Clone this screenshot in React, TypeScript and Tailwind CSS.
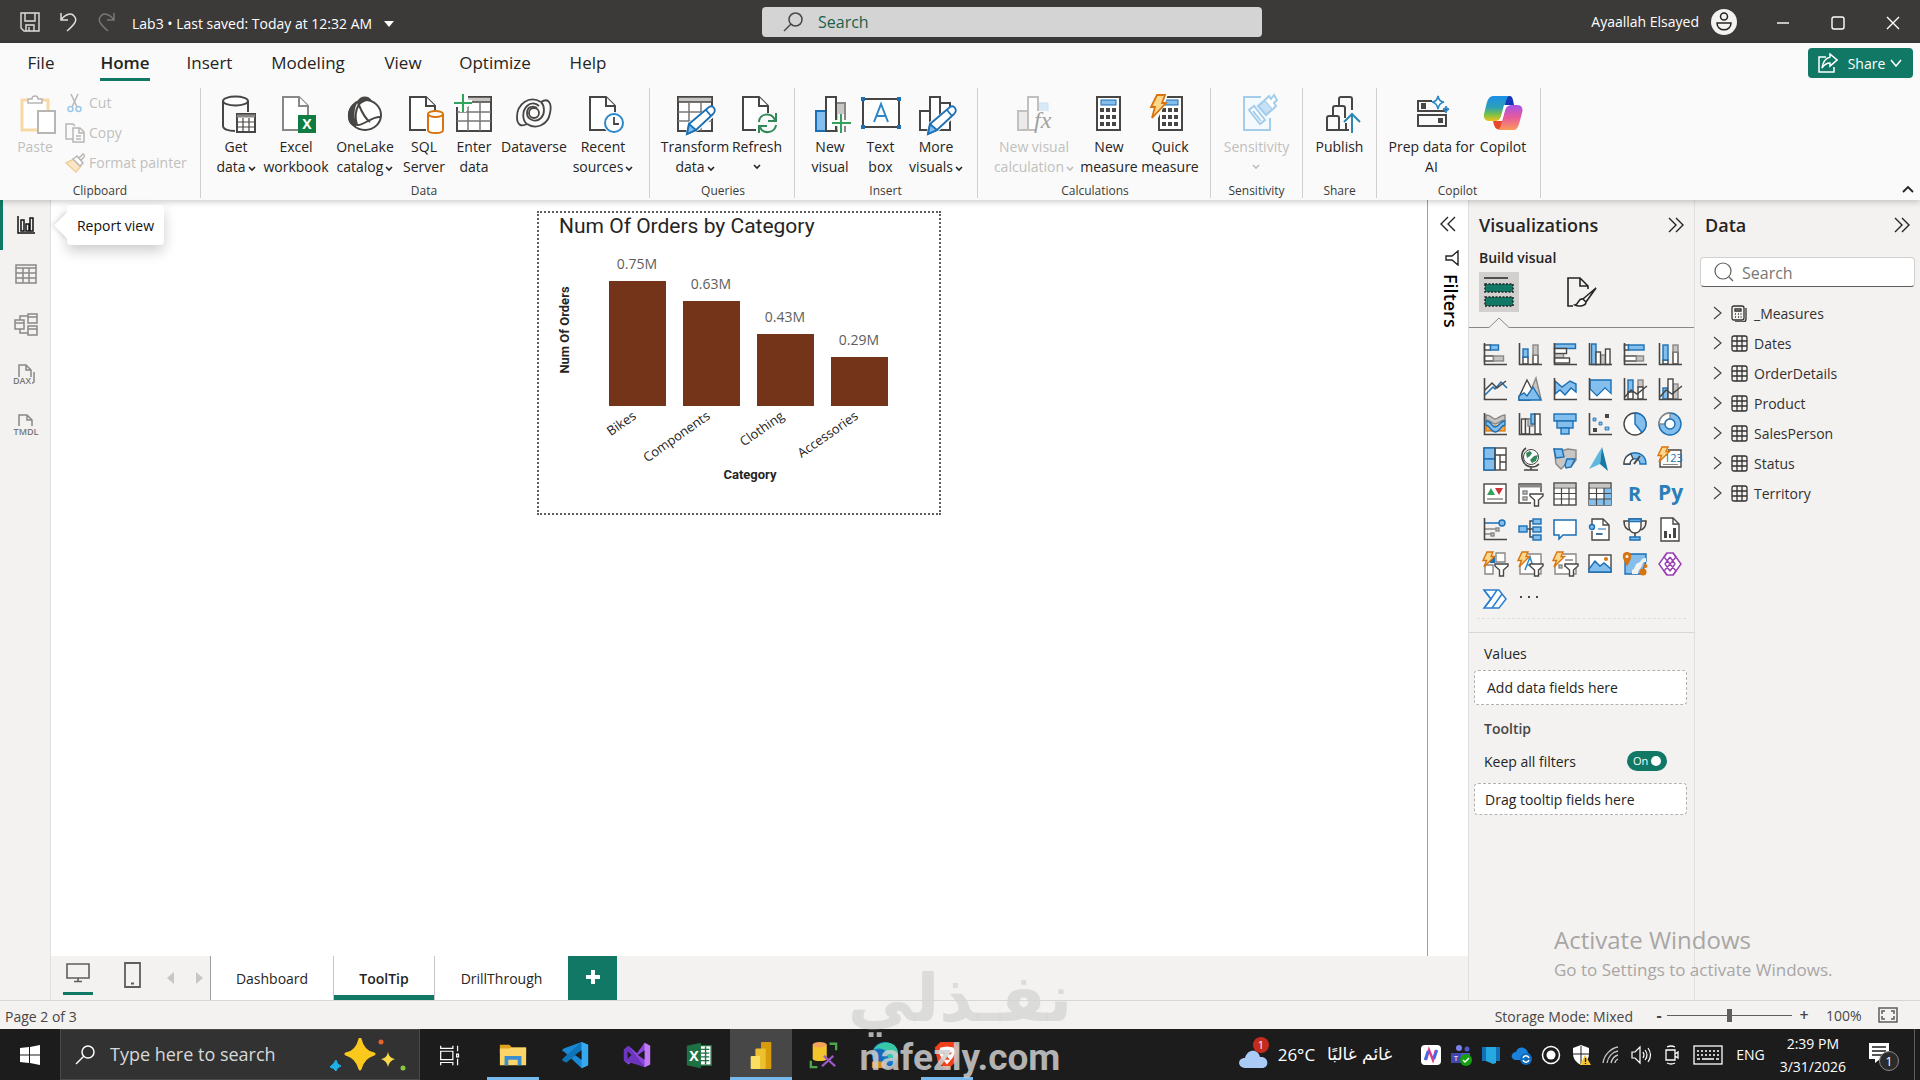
import React from "react";

const D = "#484644";
const B = "#1a6fb5";
const F = "#83beec";
const G = "#c8c6c4";
const GS = "#8a8886";
const GREEN = "#117865";

type IconProps = { children: React.ReactNode; size?: number; box?: string; className?: string };

const Svg: React.FC<IconProps> = ({ children, size = 24, box, className = "" }) => (
  <svg
    width={size}
    height={size}
    viewBox={box ?? `0 0 ${size} ${size}`}
    fill="none"
    className={`shrink-0 ${className}`}
    aria-hidden="true"
  >
    {children}
  </svg>
);

/* ---------- shared drawing parts ---------- */

const File = ({ x = 7, stroke = D }: { x?: number; stroke?: string }) => (
  <g transform={`translate(${x} 0)`} stroke={stroke} strokeWidth="2" fill="#fff">
    <path d="M1 3H17L26 12V36H1Z" />
    <path d="M17 3V12H26" />
  </g>
);

const Pencil = () => (
  <g stroke={B} strokeWidth="1.8" fill="#fff">
    <path d="M14 30L34 15Q38 13 39 16Q40 19 38 21L22 35L13 39Z" stroke="#fafafa" strokeWidth="4" />
    <path d="M14 30L34 13Q37 11 39 14Q41 17 38 20L21 36L12 40Z" />
    <path d="M14 30L21 36L12 40Z" fill={F} />
    <path d="M31 16L36 22" />
  </g>
);

const Axis = () => <path d="M1.5 1V22.5H24" stroke={D} strokeWidth="1.6" />;

const Bolt = () => (
  <path d="M4 0H10L8 4.5H11.5L1 15L3.500 8.500H0Z" fill="#fcd98a" stroke="#d8730f" strokeWidth="1.4" />
);

const Funnel = () => (
  <path d="M12 12H25V14L20.5 18V24H16.5V18L12 14Z" fill="#fff" stroke={D} strokeWidth="1.4" />
);

const Chevron = ({ className = "" }: { className?: string }) => (
  <Svg size={8} className={`inline-block ${className}`}>
    <path d="M1 2L4 5L7 2" stroke="currentColor" strokeWidth="1.6" />
  </Svg>
);

/* ---------- ribbon icons ---------- */

const TableGrid = () => (
  <g stroke={D} strokeWidth="2">
    <rect x="3" y="3" width="34" height="34" fill="#fff" />
    <path d="M3 18H37M3 27H37M14 9V37M26 9V37" stroke="#797775" strokeWidth="1.5" />
    <rect x="3" y="3" width="34" height="5" fill={G} strokeWidth="1.5" />
  </g>
);

const Calc = ({ x = 7 }: { x?: number }) => (
  <g transform={`translate(${x} 0)`}>
    <rect x="1" y="3" width="23" height="33" stroke={D} strokeWidth="2" fill="#fff" />
    <rect x="5" y="6" width="15" height="5" fill={F} stroke={B} />
    <g fill={D}>
      {[14, 21, 28].map((y) =>
        [4, 10, 16].map((cx) => <rect key={`${cx}${y}`} x={cx} y={y} width="4" height="4" />)
      )}
    </g>
  </g>
);

const ribbonIcons: Record<string, React.ReactNode> = {
  getData: (
    <>
      <path d="M7 7V32C7 35 12 37 19 37M32 7V18" stroke={D} strokeWidth="2" />
      <ellipse cx="19.5" cy="7" rx="12.5" ry="4.5" stroke={D} strokeWidth="2" fill="#fff" />
      <rect x="21" y="20" width="18" height="18" stroke={D} strokeWidth="2" fill="#fff" />
      <path d="M21 22H39" stroke={GS} strokeWidth="3" />
      <path d="M21 28H39M21 33H39M27 24V38M33 24V38" stroke={D} strokeWidth="1.2" />
    </>
  ),
  excel: (
    <>
      <File x={6} stroke="#8a8886" />
      <rect x="22" y="21" width="18" height="18" fill="#107c41" />
      <text x="31" y="35" textAnchor="middle" fontSize="14" fontWeight="700" fill="#fff">X</text>
    </>
  ),
  oneLake: (
    <>
      <ellipse cx="20" cy="21" rx="16" ry="15" stroke={D} strokeWidth="2" fill="#fff" />
      <path d="M13 8C4 10 1 20 4 28C7 33 11 33 12 31C8 22 9 14 13 8Z" fill={D} />
      <path d="M12 8C15 1 24 1 27 7C22 6 17 8 14 12Z" fill={D} />
      <path d="M13 9C16 16 19 24 25 28M12 31C19 32 26 22 36 23M14 10C10 17 10 25 12 31" stroke={D} strokeWidth="2" />
    </>
  ),
  sql: (
    <>
      <File x={5} />
      <rect x="22" y="17" width="19" height="23" fill="#fafafa" />
      <path d="M24 20V36C24 40 39 40 39 36V20" stroke="#d8730f" strokeWidth="2" fill="#fff" />
      <ellipse cx="31.5" cy="20" rx="7.5" ry="3" stroke="#d8730f" strokeWidth="2" fill="#fff" />
    </>
  ),
  enter: (
    <>
      <TableGrid />
      <path d="M0 0H14V13H0Z" fill="#fafafa" />
      <path d="M9 0V18M0 9H18" stroke="#fafafa" strokeWidth="6" />
      <path d="M9 0V18M0 9H18" stroke="#31a35a" strokeWidth="2" />
    </>
  ),
  dataverse: (
    <g stroke={D} strokeWidth="1.8">
      <path d="M27 8C15 1 3 10 3 23C3 31 7 33 13 30" />
      <path d="M27 8C35 3 38 10 36 19C34 31 22 36 13 30" />
      <path d="M27 8C31 12 31 20 27 24C22 29 13 26 13 19C13 13 19 11 23 14" />
      <path d="M13 30C8 26 8 17 13 12C17 8 22 9 25 12" />
      <circle cx="20" cy="19" r="5" />
    </g>
  ),
  recent: (
    <>
      <File x={6} />
      <circle cx="31" cy="29" r="11" fill="#fafafa" />
      <circle cx="31" cy="29" r="9" stroke="#2b88c8" strokeWidth="2" fill="#fff" />
      <path d="M31 23V30H36" stroke={D} strokeWidth="1.8" />
    </>
  ),
  transform: (
    <>
      <TableGrid />
      <Pencil />
    </>
  ),
  refresh: (
    <>
      <File x={5} />
      <rect x="19" y="19" width="22" height="22" fill="#fafafa" />
      <path d="M22 28C22 20 34 17 38 26M39 31C38 39 26 41 23 33" stroke="#31895a" strokeWidth="2" />
      <path d="M39 19V27H31M22 39V32H30" stroke="#31895a" strokeWidth="2" />
    </>
  ),
  newVisual: (
    <>
      <rect x="6" y="17" width="10" height="20" fill={F} stroke={B} strokeWidth="2" />
      <rect x="26" y="9" width="9" height="28" fill={G} stroke={GS} strokeWidth="2" />
      <rect x="16" y="3" width="10" height="34" fill="#fff" stroke={D} strokeWidth="2" />
      <path d="M31 20V39M22 29H41" stroke="#fafafa" strokeWidth="6" />
      <path d="M31 20V39M22 29H41" stroke="#31a35a" strokeWidth="2" />
    </>
  ),
  textBox: (
    <>
      <rect x="2" y="5" width="36" height="28" stroke={D} strokeWidth="2" fill="#fff" />
      <path d="M13 28L20 10L27 28M15 22H25" stroke="#2b88c8" strokeWidth="2" />
      <path d="M0 3H4V7H0ZM36 3H40V7H36ZM0 31H4V35H0ZM36 31H40V35H36Z" fill={B} />
    </>
  ),
  moreVisuals: (
    <>
      <path d="M4 17H14V36H4ZM24 9H34V36H24Z" fill="#fff" stroke={D} strokeWidth="2" />
      <rect x="14" y="3" width="10" height="33" fill="#fff" stroke={D} strokeWidth="2" />
      <Pencil />
    </>
  ),
  visualCalc: (
    <g opacity="0.5">
      <path d="M4 17H14V36H4Z" fill="#dedcda" stroke={GS} strokeWidth="2" />
      <path d="M24 9H34V18H24Z" fill="#b9dcf5" stroke="#9cc7e8" />
      <rect x="14" y="3" width="10" height="33" fill="#fff" stroke={GS} strokeWidth="2" />
      <path d="M22 17H40V40H22Z" fill="#fafafa" />
      <text x="20" y="34" fontSize="24" fontStyle="italic" fill="#4b4947" className="font-['Liberation_Serif',serif]">fx</text>
    </g>
  ),
  measure: <Calc />,
  quick: (
    <>
      <Calc x={8} />
      <path d="M0 0H18L14 12L8 24H0Z" fill="#fafafa" />
      <path d="M7 1H15L12 9H16L2 24L5 13H1Z" fill="#fcd98a" stroke="#d8730f" strokeWidth="1.8" />
    </>
  ),
  sensitivity: (
    <g stroke="#a3cdea" strokeWidth="2">
      <path d="M24 3H7V36H33V24" fill="#f3f9fd" />
      <path d="M12 16L17 12L28 26L23 30Z" fill="#fff" />
      <path d="M16 17L24 27" />
      <path d="M21 12L28 6L36 15L29 21Z" fill="#c5e0f4" />
      <path d="M28 6L32 2L34 5L37 1L40 6L37 9L39 12L36 15" fill="#fff" />
    </g>
  ),
  publish: (
    <g stroke={D} strokeWidth="2">
      <path d="M7 36V24Q7 22 9 22H17Q19 22 19 24V36ZM13 22V14Q13 12 15 12H23Q25 12 25 14V24M19 12V5Q19 3 21 3H30Q32 3 32 5V16M19 36H29M26 29V36" />
      <path d="M32 39V20M24 28L32 20L40 28" stroke="#2b88b0" />
    </g>
  ),
  prep: (
    <g strokeWidth="2" stroke={D}>
      <path d="M20 7H6V17H34V15" />
      <rect x="6" y="21" width="28" height="11" />
      <path d="M9 9H14V15H9ZM26 24H31V29H26Z" fill={D} stroke="none" />
      <path d="M26 2Q27 8 32 8Q27 9 26 15Q25 9 20 8Q25 8 26 2Z" fill="#fff" stroke="#2b88c8" strokeWidth="1.6" />
      <path d="M34 12Q34 15 37 15Q34 16 34 19Q34 16 31 15Q34 15 34 12Z" stroke="#2b88c8" strokeWidth="1.4" />
    </g>
  ),
  copilot: (
    <>
      <defs>
        <linearGradient id="cpA" x1="0" y1="0" x2="0" y2="1">
          <stop offset="0" stopColor="#1c8fe8" />
          <stop offset="0.45" stopColor="#2b9fb8" />
          <stop offset="0.75" stopColor="#7cc243" />
          <stop offset="1" stopColor="#f4c21c" />
        </linearGradient>
        <linearGradient id="cpB" x1="0" y1="0" x2="0" y2="1">
          <stop offset="0" stopColor="#a653e8" />
          <stop offset="0.5" stopColor="#e85a9a" />
          <stop offset="1" stopColor="#fb9a5a" />
        </linearGradient>
      </defs>
      <path d="M22 2H27Q29 2 30 6L31 11H25Q22 11 21 14Z" fill="#1638b8" />
      <path d="M10 27H16Q19 27 20 24L18 34Q17 36 14 35Q12 34 11 31Z" fill="#e8482c" />
      <path d="M10 2H26Q24 3 23 7L19 22Q17 27 12 27H6Q0 27 1 20L4 8Q6 2 10 2Z" fill="url(#cpA)" />
      <path d="M31 36H15Q17 35 18 31L22 16Q24 11 29 11H34Q41 11 39 19L36 30Q34 36 31 36Z" fill="url(#cpB)" />
      <path d="M21 11H26Q23 12 22 16L19 27H14Q17 26 18 22Z" fill="#fff" />
    </>
  ),
};

type Item = { icon: string; l1: string; l2?: string; drop?: boolean; off?: boolean; w: string };
type Group = { name: string; pad: string; items: Item[] };

const groups: Group[] = [
  {
    name: "Data",
    pad: "pl-[9px] pr-[11px]",
    items: [
      { icon: "getData", l1: "Get", l2: "data", drop: true, w: "w-[52px]" },
      { icon: "excel", l1: "Excel", l2: "workbook", w: "w-[68px]" },
      { icon: "oneLake", l1: "OneLake", l2: "catalog", drop: true, w: "w-[70px]" },
      { icon: "sql", l1: "SQL", l2: "Server", w: "w-[48px]" },
      { icon: "enter", l1: "Enter", l2: "data", w: "w-[52px]" },
      { icon: "dataverse", l1: "Dataverse", w: "w-[68px]" },
      { icon: "recent", l1: "Recent", l2: "sources", drop: true, w: "w-[70px]" },
    ],
  },
  {
    name: "Queries",
    pad: "pl-[11px] pr-[9px]",
    items: [
      { icon: "transform", l1: "Transform", l2: "data", drop: true, w: "w-[68px]" },
      { icon: "refresh", l1: "Refresh", drop: true, w: "w-[56px]" },
    ],
  },
  {
    name: "Insert",
    pad: "pl-[9px] pr-[10px]",
    items: [
      { icon: "newVisual", l1: "New", l2: "visual", w: "w-[52px]" },
      { icon: "textBox", l1: "Text", l2: "box", w: "w-[49px]" },
      { icon: "moreVisuals", l1: "More", l2: "visuals", drop: true, w: "w-[62px]" },
    ],
  },
  {
    name: "Calculations",
    pad: "pl-[11px] pr-[9px]",
    items: [
      { icon: "visualCalc", l1: "New visual", l2: "calculation", drop: true, off: true, w: "w-[90px]" },
      { icon: "measure", l1: "New", l2: "measure", w: "w-[60px]" },
      { icon: "quick", l1: "Quick", l2: "measure", w: "w-[62px]" },
    ],
  },
  {
    name: "Sensitivity",
    pad: "px-[9px]",
    items: [{ icon: "sensitivity", l1: "Sensitivity", drop: true, off: true, w: "w-[73px]" }],
  },
  {
    name: "Share",
    pad: "px-[9px]",
    items: [{ icon: "publish", l1: "Publish", w: "w-[55px]" }],
  },
  {
    name: "Copilot",
    pad: "pl-[9px] pr-[11px]",
    items: [
      { icon: "prep", l1: "Prep data for", l2: "AI", w: "w-[91px]" },
      { icon: "copilot", l1: "Copilot", w: "w-[52px]" },
    ],
  },
];

const RibbonItem: React.FC<{ item: Item }> = ({ item }) => (
  <button
    disabled={item.off}
    className={`flex flex-col items-center gap-[3px] pt-[6px] text-[14px] leading-5 whitespace-nowrap ${item.w} ${
      item.off ? "text-[#c1bfbd]" : "text-[#252423]"
    }`}
  >
    <Svg size={40} className="overflow-visible">
      {ribbonIcons[item.icon]}
    </Svg>
    <span className="flex flex-col items-center">
      <span>{item.l1}</span>
      <span className="flex items-center gap-[2px]">
        {item.l2}
        {item.drop && <Chevron className={item.l2 ? "mt-1" : "mt-[6px]"} />}
      </span>
    </span>
  </button>
);

const GroupName = ({ children }: { children: React.ReactNode }) => (
  <div className="mt-auto text-center text-[12px] leading-[14px] text-[#3b3a39]">{children}</div>
);

const TitleBar = () => (
  <header className="flex h-[43px] items-center bg-[#3b3a39] text-white">
    <div className="flex w-[762px] items-center pl-5">
      <button aria-label="Save">
        <Svg size={20}>
          <path d="M1 1H19V19H4L1 16ZM5 1V9H15V1M6 19V13H14V19M9 19V15" stroke="#e1dfdd" strokeWidth="1.4" />
        </Svg>
      </button>
      <button aria-label="Undo" className="ml-[19px]">
        <Svg size={20}>
          <path d="M2 1V8H9M2 8C7 1 13 1 15 4C19 8 16 12 8 19" stroke="#e1dfdd" strokeWidth="1.5" />
        </Svg>
      </button>
      <button aria-label="Redo" className="ml-[17px]">
        <Svg size={20}>
          <path d="M18 1V8H11M18 8C13 1 7 1 5 4C1 8 4 12 12 19" stroke="#797775" strokeWidth="1.5" />
        </Svg>
      </button>
      <button className="ml-[16px] mt-1 flex items-center gap-3 text-[14px]">
        Lab3 • Last saved: Today at 12:32 AM
        <Svg size={10}>
          <path d="M0 2H10L5 8Z" fill="#fff" />
        </Svg>
      </button>
    </div>
    <label className="flex h-[30px] flex-1 items-center rounded-sm bg-[#d4d4d4] pl-[21px]">
      <Svg size={20}>
        <circle cx="12.5" cy="7.5" r="6.5" stroke={D} strokeWidth="1.5" />
        <path d="M8 12L1 19" stroke={D} strokeWidth="1.5" />
      </Svg>
      <input
        aria-label="Search"
        placeholder="Search"
        className="ml-[15px] flex-1 bg-transparent text-[16px] outline-none placeholder:text-[#1b6048]"
      />
    </label>
    <div className="flex w-[658px] items-center justify-end pr-[11px]">
      <span className="text-[14px]">Ayaallah Elsayed</span>
      <Svg size={26} className="ml-3">
        <circle cx="13" cy="13" r="13" fill="#f3f2f1" />
        <circle cx="13" cy="7.5" r="3.5" stroke="#252423" strokeWidth="1.5" />
        <path d="M6 14H20C20 23 6 23 6 14Z" stroke="#252423" strokeWidth="1.5" />
      </Svg>
      <button aria-label="Minimize" className="ml-[38px]">
        <Svg size={16}><path d="M2 9H14" stroke="#fff" strokeWidth="1.4" /></Svg>
      </button>
      <button aria-label="Maximize" className="ml-[39px]">
        <Svg size={16}><rect x="2" y="3" width="12" height="12" rx="2" stroke="#fff" strokeWidth="1.4" /></Svg>
      </button>
      <button aria-label="Close" className="ml-[39px] mr-2">
        <Svg size={16}><path d="M2 3L14 15M14 3L2 15" stroke="#fff" strokeWidth="1.4" /></Svg>
      </button>
    </div>
  </header>
);

const menu = [
  { name: "File", w: "w-[56px]" },
  { name: "Home", w: "w-[112px]" },
  { name: "Insert", w: "w-[57px]" },
  { name: "Modeling", w: "w-[140px]" },
  { name: "View", w: "w-[50px]" },
  { name: "Optimize", w: "w-[134px]" },
  { name: "Help", w: "w-[52px]" },
];

const Ribbon = () => (
  <div className="relative z-10 bg-[#fafafa] shadow-[0_2px_6px_rgba(0,0,0,0.2)]">
    <nav className="flex h-[45px] items-start pl-[13px] pr-[7px]">
      {menu.map((m) => (
        <a key={m.name} href="#" className={`flex justify-center pt-2 text-[17px] leading-6 text-[#252423] ${m.w}`}>
          <span className={m.name === "Home" ? "border-b-[3px] border-[#117865] pb-[3px] font-semibold" : ""}>
            {m.name}
          </span>
        </a>
      ))}
      <button className="ml-auto mt-[5px] flex h-[30px] w-[105px] items-center justify-center gap-[10px] rounded bg-[#117865] text-[14px] text-white">
        <Svg size={20}>
          <path d="M8 4H1V19H16V14" stroke="#fff" strokeWidth="1.5" />
          <path d="M12 1L19 7L12 13V10C8 10 6 12 4 15C5 8 8 5 12 4Z" stroke="#fff" strokeWidth="1.5" />
        </Svg>
        <span className="flex items-center gap-1">
          Share
          <Svg size={14}><path d="M2 4L7 10L12 4" stroke="#fff" strokeWidth="1.5" /></Svg>
        </span>
      </button>
    </nav>
    <div className="flex h-[112px] items-stretch">
      <section className="flex w-[201px] flex-col border-r border-[#d2d0ce] mb-[2px]">
        <div className="flex text-[14px] leading-5 text-[#c1bfbd]">
          <button disabled className="flex w-[40px] flex-col items-center gap-[3px] pt-[6px] ml-[15px]">
            <Svg size={40} className="overflow-visible">
              <rect x="7" y="6" width="26" height="30" fill="#fff" stroke="#f7d9a5" strokeWidth="3" />
              <path d="M13 9V5H17C17 1 23 1 23 5H27V9Z" stroke="#b8b6b4" strokeWidth="1.5" fill="#fff" />
              <rect x="23" y="17" width="17" height="22" fill="#fff" stroke="#b8b6b4" strokeWidth="2" />
            </Svg>
            Paste
          </button>
          <div className="ml-[10px] flex flex-col">
            <button disabled className="flex h-[30px] items-center gap-1">
              <Svg size={20}>
                <path d="M6 1L12 14M13 1L7 14" stroke="#b8b6b4" strokeWidth="1.5" />
                <circle cx="5.5" cy="16" r="2.5" stroke="#9cc7e8" strokeWidth="1.5" />
                <circle cx="13.5" cy="16" r="2.5" stroke="#9cc7e8" strokeWidth="1.5" />
              </Svg>
              Cut
            </button>
            <button disabled className="flex h-[30px] items-center gap-1">
              <Svg size={20}>
                <path d="M8 16H1V1H8L10 3" stroke="#b8b6b4" strokeWidth="1.5" />
                <path d="M8 5H15L19 9V19H8ZM14 5V10H19M11 13H16M11 16H16" stroke="#b8b6b4" strokeWidth="1.5" />
              </Svg>
              Copy
            </button>
            <button disabled className="flex h-[30px] items-center gap-1">
              <Svg size={20}>
                <path d="M1 10L9 6L16 13L11 19Z" fill="#fbe6c4" stroke="#f0cf9c" strokeWidth="1.5" />
                <path d="M8 6L12 3L18 10L15 13ZM14 5L18 1L20 3L16 7" fill="#fff" stroke="#b8b6b4" strokeWidth="1.5" />
              </Svg>
              Format painter
            </button>
          </div>
        </div>
        <GroupName>Clipboard</GroupName>
      </section>
      {groups.map((g) => (
        <section key={g.name} className={`mb-[2px] flex flex-col border-r border-[#d2d0ce] ${g.pad}`}>
          <div className="flex items-start">
            {g.items.map((i) => (
              <RibbonItem key={i.icon} item={i} />
            ))}
          </div>
          <GroupName>{g.name}</GroupName>
        </section>
      ))}
      <button aria-label="Collapse the ribbon" className="ml-auto mb-[5px] mr-[6px] self-end">
        <Svg size={12}><path d="M1 9L6 4L11 9" stroke="#252423" strokeWidth="1.8" /></Svg>
      </button>
    </div>
  </div>
);

/* ---------- left rail ---------- */

const railIcons = [
  {
    name: "Report view",
    icon: <path d="M4 3V20H21M7 7H10V18H7ZM12 11H15V18H12ZM16 5H19V18H16Z" stroke="#111" strokeWidth="1.5" />,
  },
  {
    name: "Table view",
    icon: <path d="M2 2H22V20H2ZM2 5H22M2 10H22M2 15H22M9 5V20M15 5V20" stroke={GS} strokeWidth="1.5" />,
  },
  {
    name: "Model view",
    icon: (
      <path
        d="M1 7H10V16H1ZM14 1H23V10H14ZM14 13H23V22H14ZM1 10H10M14 4H23M14 16H23M6 7V3H14M6 16V20H14"
        stroke={GS}
        strokeWidth="1.5"
      />
    ),
  },
  {
    name: "DAX query view",
    icon: (
      <>
        <path d="M5 14V2H12L17 7V14M12 2V7H17M20 9V18Q20 20 18 20" stroke={GS} strokeWidth="1.5" />
        <text x="-1" y="21" fontSize="9" fontWeight="600" fill="#797775">DAX</text>
      </>
    ),
  },
  {
    name: "TMDL view",
    icon: (
      <>
        <path d="M5 13V2H13L18 7V13M13 2V7H18" stroke={GS} strokeWidth="1.5" />
        <text x="12" y="22" textAnchor="middle" fontSize="9" fontWeight="600" fill="#797775">TMDL</text>
      </>
    ),
  },
];

const Rail = () => (
  <nav className="relative flex w-[51px] flex-col border-r border-[#e1dfdd] bg-[#f3f2f1]">
    {railIcons.map((r, i) => (
      <button
        key={r.name}
        aria-label={r.name}
        className={`flex h-[50px] items-center justify-center border-l-[3px] pr-[2px] ${
          i === 0 ? "border-[#117865]" : "border-transparent"
        }`}
      >
        <Svg className="overflow-visible">{r.icon}</Svg>
      </button>
    ))}
    <div
      role="tooltip"
      className="absolute left-[67px] top-[5px] z-10 flex h-10 w-[97px] items-center justify-center rounded-sm bg-white text-[14px] whitespace-nowrap text-[#111] shadow-[0_6px_14px_rgba(0,0,0,0.2)]"
    >
      <span className="absolute -left-[9px] h-[19px] w-[19px] rotate-45 bg-white shadow-[-2px_2px_4px_rgba(0,0,0,0.1)]" />
      <span className="relative">Report view</span>
    </div>
  </nav>
);

/* ---------- chart ---------- */

const bars = [
  { name: "Bikes", label: "0.75M", h: 125 },
  { name: "Components", label: "0.63M", h: 105 },
  { name: "Clothing", label: "0.43M", h: 72 },
  { name: "Accessories", label: "0.29M", h: 49 },
];

const Chart = () => (
  <figure className="mt-[11px] h-[304px] w-[404px] border-2 border-dotted border-[#605e5c] bg-white font-['Roboto',sans-serif]">
    <figcaption className="h-7 pl-5 text-[21px] leading-[26px] text-[#252423]">Num Of Orders by Category</figcaption>
    <svg width="400" height="270" viewBox="0 0 400 270">
      {bars.map((b, i) => {
        const x = 70 + i * 74;
        return (
          <g key={b.name} className="font-['Open_Sans',sans-serif]">
            <rect x={x} y={165 - b.h} width="57" height={b.h} fill="#73341a" />
            <text x={x + 28} y={153 - b.h} textAnchor="middle" fontSize="14" fill="#605e5c">
              {b.label}
            </text>
            <text
              transform={`translate(${x + 28} 177) rotate(-35)`}
              textAnchor="end"
              fontSize="13"
              fill="#252423"
            >
              {b.name}
            </text>
          </g>
        );
      })}
      <text x="211" y="238" textAnchor="middle" fontSize="13" fontWeight="700" fill="#252423">
        Category
      </text>
      <text transform="translate(30 89) rotate(-90)" textAnchor="middle" fontSize="13" fontWeight="700" fill="#252423">
        Num Of Orders
      </text>
    </svg>
  </figure>
);

/* ---------- visual gallery ---------- */

const gs = { fill: G, stroke: GS, strokeWidth: 1.4 };
const bs = { fill: F, stroke: B, strokeWidth: 1.4 };
const ws = { fill: "#fff", stroke: D, strokeWidth: 1.4 };

const visuals: [string, React.ReactNode][] = [
  ["Stacked bar", <><rect x="1.5" y="3" width="6" height="5" {...ws} /><rect x="7.5" y="3" width="8" height="5" {...bs} /><rect x="1.5" y="14" width="9" height="5" {...ws} /><rect x="10.5" y="14" width="10" height="5" {...gs} /><Axis /></>],
  ["Stacked column", <><rect x="5" y="15" width="5" height="7" {...ws} /><rect x="5" y="7" width="5" height="8" {...bs} /><rect x="15" y="13" width="5" height="9" {...ws} /><rect x="15" y="3" width="5" height="10" {...gs} /><Axis /></>],
  ["Clustered bar", <><rect x="1.5" y="11" width="9" height="5" {...gs} /><rect x="1.5" y="2" width="21" height="4.5" {...bs} /><rect x="1.5" y="6.5" width="12" height="5" {...ws} /><rect x="1.5" y="16" width="15" height="5" {...ws} /><Axis /></>],
  ["Clustered column", <><rect x="12.5" y="13" width="5" height="9.5" {...gs} /><rect x="3.5" y="2" width="4.5" height="20.5" {...bs} /><rect x="8" y="10" width="4.5" height="12.5" {...ws} /><rect x="17.5" y="7" width="4.5" height="15.5" {...ws} /><Axis /></>],
  ["100% bar", <><rect x="1.5" y="3" width="4" height="5" {...ws} /><rect x="5.5" y="3" width="15.5" height="5" {...bs} /><rect x="1.5" y="14" width="12" height="5" {...ws} /><rect x="13.5" y="14" width="7" height="5" {...gs} /><Axis /></>],
  ["100% column", <><rect x="5" y="18" width="5" height="4" {...ws} /><rect x="5" y="3" width="5" height="15" {...bs} /><rect x="15" y="10" width="5" height="12" {...ws} /><rect x="15" y="3" width="5" height="7" {...gs} /><Axis /></>],
  ["Line", <><path d="M2 18L10 10L12 12L18 5L24 11" stroke={B} strokeWidth="1.5" /><path d="M2 13L9 6L14 11L23 4" stroke={D} strokeWidth="1.5" /><Axis /></>],
  ["Area", <><path d="M13 13L18 1L23 22H16Z" {...gs} /><path d="M1 20L9 3L17 18L12 23H1Z" {...ws} /><path d="M1 23V19L6 16L9 19L15 10L23 23Z" {...bs} /></>],
  ["Stacked area", <><path d="M2 17L7 13L12 18L18 11L24 15V22H2Z" fill="#fff" /><path d="M2 4L9 10L17 4L23 7V15L18 11L12 18L7 13L2 17Z" {...bs} /><Axis /></>],
  ["100% area", <><path d="M2 3H23V17L17 11L9 19L2 12Z" {...bs} /><path d="M2 13L9 20L17 12L24 18V22H2Z" fill="#fff" /><Axis /></>],
  ["Line and stacked", <><rect x="5" y="3" width="5" height="12" {...bs} /><rect x="15" y="3" width="5" height="7" {...gs} /><rect x="5" y="15" width="5" height="7" {...ws} /><rect x="15" y="10" width="5" height="12" {...ws} /><path d="M2 20L8 13L14 17L24 9" stroke={D} strokeWidth="1.5" /><Axis /></>],
  ["Line and clustered", <><rect x="15" y="7" width="5" height="15" {...gs} /><rect x="5" y="11" width="5" height="11" {...bs} /><rect x="10" y="2" width="5" height="20" {...ws} /><path d="M2 20L8 13L14 17L24 9" stroke={D} strokeWidth="1.5" /><Axis /></>],
  ["Ribbon", <><rect x="3" y="14" width="19" height="5" fill="#f6a94a" stroke="#d8730f" strokeWidth="1.2" /><path d="M3 3C9 3 9 7 12 7S17 3 22 3V8C17 8 16 12 12 12S9 8 3 8Z" {...gs} /><path d="M3 9C9 9 8 15 12 15S17 9 22 9V13C18 13 17 20 12 20S7 13 3 13Z" {...bs} /><Axis /></>],
  ["Waterfall", <><rect x="3.5" y="7" width="4" height="15" {...ws} /><rect x="7.5" y="7" width="4" height="15" {...ws} /><rect x="10" y="7" width="5" height="7" {...gs} /><rect x="13" y="2" width="4" height="10" {...bs} /><rect x="17" y="2" width="5" height="20" {...ws} /><Axis /></>],
  ["Funnel", <><rect x="1" y="2" width="22" height="7" {...bs} /><rect x="4" y="9" width="16" height="7" {...bs} /><rect x="8" y="16" width="8" height="6" {...bs} /></>],
  ["Scatter", <><path d="M17 2H21V6H17ZM5 16H9V20H5Z" fill={D} /><path d="M5 6H8V9H5ZM11 10H14V13H11ZM17 15H21V18H17Z" {...bs} strokeWidth="0.8" /><Axis /></>],
  ["Pie", <><circle cx="12" cy="12" r="11" {...ws} /><path d="M12 1A11 11 0 0 1 19 20.5L12 12Z" {...bs} /></>],
  ["Donut", <><circle cx="12" cy="12" r="11" {...bs} /><path d="M1 12A11 11 0 0 1 12 1V7A5 5 0 0 0 7 12Z" fill="#fff" stroke={GS} strokeWidth="1.4" /><circle cx="12" cy="12" r="5" fill="#fff" stroke={B} strokeWidth="1.4" /></>],
  ["Treemap", <><rect x="1" y="1" width="22" height="22" {...ws} /><rect x="1" y="1" width="11" height="11" {...bs} /><rect x="1" y="12" width="11" height="11" {...bs} /><path d="M12 8H23M12 1V23M17 8V23M17 15H23" stroke={D} strokeWidth="1.4" /></>],
  ["Map", <><circle cx="13" cy="10" r="7.5" fill="#fff" stroke={D} /><path d="M8 6L12 4L14 6L12 9L9 11ZM16 9L20 8L18 14L14 16L12 13Z" fill="#31895a" /><path d="M8 1C1 6 3 19 14 20C17 20 19 19 21 17M13 20V23M6 23H20" stroke={D} strokeWidth="1.6" /></>],
  ["Filled map", <><path d="M1 2L8 4L15 2L23 3V13L18 20L12 18L8 22L3 17Z" {...gs} /><path d="M1 2H9L11 10L3 11ZM12 18L14 12H22L18 20L13 21Z" {...bs} /></>],
  ["Azure map", <><path d="M14 0L1 22L12 17Z" fill="#5cb8dc" /><path d="M14 0L20 24L12 17Z" fill="#1778a8" /></>],
  ["Gauge", <><path d="M1 17C1 2 23 2 23 17H17C17 10 7 10 7 17Z" {...bs} /><path d="M1 17C1 11 5 8 8 7L10 12C8 13 7 15 7 17Z" fill="#fff" stroke={D} strokeWidth="1.3" /><path d="M11 17L17 9" stroke={D} strokeWidth="2" /></>],
  ["Card", <><path d="M10 3H23V20H2V12" {...ws} /><text x="6" y="15" fontSize="11" fill={B}>123</text><path d="M5 17.5H20" stroke={GS} /><Bolt /></>],
  ["KPI", <><rect x="1" y="2" width="22" height="19" {...ws} /><path d="M4 13L8 6L12 13Z" fill="#31a35a" /><path d="M12 6H20L16 13Z" fill="#d13438" /><path d="M4 17H20" stroke={GS} strokeWidth="1.5" /></>],
  ["Slicer", <><path d="M13 21H1V2H23V10" {...ws} /><path d="M1 4H23" stroke={GS} strokeWidth="3" /><path d="M5 9H9V12H5ZM5 15H9V18H5Z" {...gs} /><Funnel /></>],
  ["Table", <><rect x="1" y="1" width="22" height="22" {...ws} /><path d="M2 3.5H22" stroke={G} strokeWidth="3" /><path d="M1 6H23M1 11.5H23M1 17H23M8.5 6V23M16 6V23" stroke={D} strokeWidth="1.2" /></>],
  ["Matrix", <><rect x="1" y="1" width="22" height="22" {...ws} /><path d="M16 6H23V23H1V17H16Z" fill={F} /><path d="M2 3.5H22" stroke={G} strokeWidth="3" /><path d="M1 6H23M1 11.5H23M1 17H23M8.5 6V23M16 6V23" stroke={D} strokeWidth="1.2" /></>],
  ["R script", <text x="5" y="19" fontSize="20" fontWeight="700" fill="#2b7fb8">R</text>],
  ["Python", <text x="0" y="18" fontSize="21" fontWeight="700" fill="#2b7fb8">Py</text>],
  ["Key influencers", <><path d="M2 6H16" stroke={B} strokeWidth="1.5" /><circle cx="19" cy="6" r="3" {...bs} /><path d="M2 12H13M2 17H8" stroke={GS} strokeWidth="1.5" /><rect x="13" y="11" width="3" height="3" {...gs} /><rect x="8" y="16" width="3" height="3" {...gs} /><Axis /></>],
  ["Decomposition tree", <><path d="M8 12H12M15 4H12V20H15M12 12H15" stroke={D} strokeWidth="1.5" /><rect x="1" y="9" width="8" height="6" {...bs} /><rect x="15" y="2" width="8" height="5" {...bs} /><rect x="15" y="10" width="8" height="5" {...bs} /><rect x="15" y="18" width="8" height="5" {...bs} /></>],
  ["Q&A", <path d="M1 3H23V18H10L6 22V18H1Z" fill="#fff" stroke={B} strokeWidth="1.5" />],
  ["Narrative", <><path d="M4 7V2H15L21 8V23H4V14" {...ws} /><path d="M15 2V8H21M8 17H14" stroke={D} strokeWidth="1.3" /><path d="M10 12H18M8 17H15" stroke={B} strokeWidth="1.2" /><circle cx="4" cy="10" r="2.5" {...bs} /></>],
  ["Goals", <><path d="M6 4H1C1 11 4 13 8 13M18 4H23C23 11 20 13 16 13M12 16V20" stroke={D} strokeWidth="1.6" /><path d="M6 2H18V10Q17 16 12 16Q7 16 6 10Z" {...ws} /><path d="M6 2H18V4.5H6Z" {...bs} /><path d="M7 20H17V23H7Z" {...bs} /></>],
  ["Paginated report", <><path d="M3 1H15L21 7V24H3Z" {...ws} /><path d="M15 1V7H21" stroke={D} strokeWidth="1.4" /><path d="M6 14H9V21H6ZM11 17H13V21H11ZM15 11H18V21H15Z" fill={D} /></>],
  ["Button slicer", <><path d="M13 1H22V10H13ZM2 13H10V22H2Z" fill="#fff" stroke={GS} strokeWidth="1.4" /><path d="M7 5H12V11H7Z" fill={B} /><path d="M12 12H16V16Z" fill={G} /><Bolt /><Funnel /></>],
  ["Text slicer", <><path d="M10 2H23V22H2V13" {...ws} stroke={GS} /><path d="M7 18L12 5L16 18M9 13H15" stroke="#2b88c8" strokeWidth="1.5" /><Bolt /><Funnel /></>],
  ["List slicer", <><path d="M10 2H23V22H2V13" {...ws} stroke={GS} /><path d="M12 8H20M11 14H14" stroke={GS} strokeWidth="1.5" /><rect x="6" y="13" width="3" height="3" {...gs} /><Bolt /><Funnel /></>],
  ["Image", <><rect x="1" y="3" width="22" height="17" {...ws} /><path d="M1 17L7 9L12 14L16 11L23 17V20H1Z" {...bs} /><circle cx="18" cy="7" r="2" fill="#d8730f" /></>],
  ["ArcGIS map", <><path d="M2 2H23V9L19 22H2Z" {...bs} /><path d="M23 6C17 6 19 10 15 11S13 17 9 18V22H15C15 17 18 17 19 13S21 10 23 10Z" fill="#f3f2f1" /><path d="M4 14C-3 4 0 0 4 0S11 4 4 14Z" fill="#d8730f" /><circle cx="4" cy="4.5" r="1.5" fill="#fff" /><circle cx="20" cy="20" r="3.5" fill="#d8730f" /><circle cx="22.5" cy="14" r="2" fill="#d8730f" /></>],
  ["Power Apps", <g stroke="#9b3fb5" strokeWidth="1.4" strokeLinejoin="round"><path d="M9 1H15L23 12L15 23H9L1 12Z" fill="#fff" /><path d="M9 1L6 5L12 12L18 19L15 23M15 1L18 5L12 12L6 19L9 23M12 5L17 12L12 19M12 5L7 12L12 19" /></g>],
  ["Power Automate", <g stroke="#2b7fd0" strokeWidth="1.5"><path d="M1 3H16L23 12L16 21H1L8 12Z" fill="#fff" /><path d="M8 12L14 3M9 21L19 7M2 20L8 12L1 3" /></g>],
  ["More", <path d="M2 9H4V11H2ZM10 9H12V11H10ZM18 9H20V11H18Z" fill={D} />],
];

const DoubleChevron = ({ left = false }: { left?: boolean }) => (
  <Svg size={16} className={left ? "rotate-180" : ""}>
    <path d="M1 1L8 8L1 15M8 1L15 8L8 15" stroke="#252423" strokeWidth="1.4" />
  </Svg>
);

const Visualizations = () => (
  <aside className="flex w-[226px] flex-col border-l border-[#e1dfdd] bg-[#f3f2f1] text-[14px] text-[#252423]">
    <div className="flex h-[50px] items-center justify-between px-[10px]">
      <h2 className="text-[18px] font-semibold">Visualizations</h2>
      <button aria-label="Collapse visualizations"><DoubleChevron /></button>
    </div>
    <h3 className="pl-[10px] leading-4 font-semibold">Build visual</h3>
    <div className="mt-[6px] flex h-10 items-center gap-12 pl-[10px]">
      <button aria-label="Build visual" className="flex h-10 w-10 items-center justify-center bg-[#d2d0ce]">
        <Svg size={30}>
          <path d="M0 1H24" stroke="#252423" strokeWidth="1.5" />
          <path d="M1 7H29V15H1ZM1 20H29V29H1Z" fill={GREEN} stroke="#252423" strokeWidth="1.5" strokeDasharray="2 1.5" />
        </Svg>
      </button>
      <button aria-label="Format visual">
        <Svg size={30}>
          <path d="M6 29H1V1H13L21 9V12M13 1V9H21" stroke="#252423" strokeWidth="1.6" />
          <path d="M29 11L16 22L19 25ZM16 22C11 21 12 27 8 28C12 30 19 29 19 25" stroke="#252423" strokeWidth="1.6" fill="#fff" />
        </Svg>
      </button>
    </div>
    <svg className="mt-[5px] h-3 w-full shrink-0" aria-hidden="true">
      <path d="M0 10.5H20L30 1L40 10.5H226" stroke={GS} fill="none" />
    </svg>
    <div className="mt-[7px] grid w-[218px] grid-cols-6 pl-[8px]">
      {visuals.map(([name, icon]) => (
        <button key={name} aria-label={name} className="flex h-[35px] w-[35px] items-center justify-center">
          <Svg className="overflow-visible">{icon}</Svg>
        </button>
      ))}
    </div>
    <div className="mx-2 mt-[2px] border-t border-dashed border-[#e1dfdd]" />
    <div className="mt-[13px] flex flex-col border-t border-[#d8d6d4] pl-[5px] pr-[7px]">
      <h4 className="pl-[10px] pt-[11px] leading-5">Values</h4>
      <div className="mt-[6px] flex h-[35px] items-center rounded-sm border border-dashed border-[#b3b0ad] bg-white pl-3">
        Add data fields here
      </div>
      <h4 className="mt-[14px] pl-[10px] leading-5 font-semibold text-[#484644]">Tooltip</h4>
      <label className="mt-[12px] flex h-5 items-center justify-between pl-[10px] pr-5">
        Keep all filters
        <input type="checkbox" role="switch" defaultChecked className="peer sr-only" />
        <span className="flex h-5 w-10 items-center justify-between rounded-full bg-[#117865] px-[6px] text-[11px] text-white">
          On
          <span className="h-[10px] w-[10px] rounded-full bg-white" />
        </span>
      </label>
      <div className="mt-[12px] flex h-8 items-center rounded-sm border border-dashed border-[#b3b0ad] bg-white pl-[10px]">
        Drag tooltip fields here
      </div>
    </div>
  </aside>
);

const tables = ["_Measures", "Dates", "OrderDetails", "Product", "SalesPerson", "Status", "Territory"];

const DataPane = () => (
  <aside className="w-[226px] border-l border-[#e1dfdd] bg-[#f3f2f1] text-[#323130]">
    <div className="flex h-[50px] items-center justify-between px-[10px]">
      <h2 className="text-[18px] font-semibold text-[#252423]">Data</h2>
      <button aria-label="Collapse data"><DoubleChevron /></button>
    </div>
    <label className="mx-[5px] mt-[7px] flex h-[30px] items-center rounded border border-[#d2d0ce] border-b-[#605e5c] bg-white pl-[13px]">
      <Svg size={20}>
        <circle cx="9" cy="9" r="8" stroke="#605e5c" strokeWidth="1.2" />
        <path d="M15 15L19 19" stroke="#605e5c" strokeWidth="1.2" />
      </Svg>
      <input
        aria-label="Search data"
        placeholder="Search"
        className="ml-2 w-36 bg-transparent pt-[2px] text-[16px] outline-none placeholder:text-[#797775]"
      />
    </label>
    <ul className="mt-[11px] text-[14px]">
      {tables.map((t, i) => (
        <li key={t}>
          <button className="flex h-[30px] items-center pl-[18px]">
            <Svg size={10} box="0 0 10 14" className="h-[14px]">
              <path d="M1 1L8 7L1 13" stroke="#484644" strokeWidth="1.2" />
            </Svg>
            <Svg size={17} className="ml-2">
              {i === 0 ? (
                <path
                  d="M3 1H11Q13 1 13 3V13Q13 15 11 15H3Q1 15 1 13V3Q1 1 3 1ZM4 4H10V6H4ZM4 9H5M7 9H8M9.5 9H10.5M4 12H5M7 12H8M9.5 12H10.5M15 3V14Q15 17 12 17H4"
                  stroke="#323130"
                  strokeWidth="1.3"
                />
              ) : (
                <path
                  d="M3 1H14Q16 1 16 3V14Q16 16 14 16H3Q1 16 1 14V3Q1 1 3 1ZM1 6H16M1 11H16M6 1V16M11 1V16"
                  stroke="#323130"
                  strokeWidth="1.3"
                />
              )}
            </Svg>
            <span className="ml-[6px]">{t}</span>
          </button>
        </li>
      ))}
    </ul>
  </aside>
);

const PageTabs = () => (
  <div className="flex h-11 items-stretch bg-[#f3f2f1] text-[14px] text-[#252423]">
    <button aria-label="Desktop layout" className="ml-[12px] mb-[5px] flex w-[30px] items-center justify-center border-b-[3px] border-[#117865] pb-1">
      <Svg>
        <path d="M1 4H23V18H1ZM12 18V21M8 21.5H16" stroke="#605e5c" strokeWidth="1.6" />
      </Svg>
    </button>
    <button aria-label="Mobile layout" className="ml-[28px] mb-[7px] flex items-center">
      <Svg className="overflow-visible">
        <path d="M4 0H19V24H4ZM10 20.5H13" stroke="#605e5c" strokeWidth="1.8" />
      </Svg>
    </button>
    <button aria-label="Previous page" className="ml-[20px]">
      <Svg size={12}><path d="M9 0V12L2 6Z" fill={G} /></Svg>
    </button>
    <button aria-label="Next page" className="ml-[16px] mr-[5px]">
      <Svg size={12}><path d="M3 0V12L10 6Z" fill={G} /></Svg>
    </button>
    <button className="w-[123px] border-l border-[#a19f9d] bg-white">Dashboard</button>
    <button className="w-[102px] border-x border-[#c8c6c4] bg-white font-semibold shadow-[inset_0_-5px_0_#117865]">
      ToolTip
    </button>
    <button className="w-[133px] bg-white">DrillThrough</button>
    <button aria-label="New page" className="flex w-[49px] items-center justify-center bg-[#117865] pb-[3px]">
      <Svg size={14}><path d="M7 0V14M0 7H14" stroke="#fff" strokeWidth="4" /></Svg>
    </button>
  </div>
);

const StatusBar = () => (
  <footer className="flex h-[29px] items-center border-t border-[#d8d6d4] bg-[#f3f2f1] pl-[5px] pr-[22px] text-[14px] text-[#484644]">
    <span className="pt-[2px]">Page 2 of 3</span>
    <span className="ml-auto pt-[2px]">Storage Mode: Mixed</span>
    <button aria-label="Zoom out" className="ml-[20px] w-3 text-[16px] font-bold">-</button>
    <input
      type="range"
      aria-label="Zoom"
      className="ml-[2px] h-[14px] w-[125px] appearance-none bg-[linear-gradient(#605e5c,#605e5c)] bg-[length:100%_1px] bg-center bg-no-repeat [&::-webkit-slider-thumb]:h-[13px] [&::-webkit-slider-thumb]:w-[5px] [&::-webkit-slider-thumb]:appearance-none [&::-webkit-slider-thumb]:bg-[#605e5c]"
    />
    <button aria-label="Zoom in" className="ml-[6px] w-3 text-[16px] font-semibold">+</button>
    <span className="ml-4 w-9">100%</span>
    <button aria-label="Fit to page" className="ml-[16px]">
      <Svg size={20}>
        <path d="M1 3H19V17H1ZM7 6H4V9M13 6H16V9M4 11V14H7M16 11V14H13" stroke="#605e5c" strokeWidth="1.5" />
      </Svg>
    </button>
  </footer>
);

/* ---------- windows taskbar ---------- */

const apps: { name: string; state?: string; icon: React.ReactNode }[] = [
  {
    name: "Task view",
    icon: <path d="M5 6V9H18V6M5 27V24H18V27M5 12H18V21H5ZM23 6V12M23 20V27M22 15H24V18H22Z" stroke="#fff" strokeWidth="1.3" />,
  },
  {
    name: "File Explorer",
    state: "open",
    icon: (
      <>
        <path d="M2 5H12L15 8H30V14H2Z" fill="#e0a21b" />
        <path d="M2 9H12L15 8H30V27H2Z" fill="#fbd567" />
        <path d="M7 27V17H25V27H21V21H11V27Z" fill="#3a8fd0" />
      </>
    ),
  },
  {
    name: "VS Code",
    icon: (
      <>
        <path d="M23 2L30 5V27L23 30L5 13L2 11L4 9Z" fill="#1a8ad6" />
        <path d="M23 2L23 11L7 24L4 23L2 21L6 17Z" fill="#1075b8" />
        <path d="M23 2L30 5V27L23 30Z" fill="#35aaf0" />
        <path d="M23 11V21L16 16Z" fill="#1c1c1c" />
      </>
    ),
  },
  {
    name: "Visual Studio",
    icon: (
      <>
        <path d="M2 10L7 6L16 14L24 3L30 6V26L24 29L16 19L7 26L2 22Z" fill="#8b45dc" />
        <path d="M2 10L7 6L24 29L18 27L2 22Z" fill="#6b35bd" />
        <path d="M24 3L30 6V26L24 29Z" fill="#c07bf3" />
        <path d="M24 11V21L17 16ZM6 12V20L10 16Z" fill="#1c1c1c" />
      </>
    ),
  },
  {
    name: "Excel",
    icon: (
      <>
        <path d="M17 6H29V27H17Z" fill="#fff" stroke="#1e7145" strokeWidth="1.5" />
        <path d="M18 10H27M18 14H27M18 18H27M18 22H27M23 7V26" stroke="#1e7145" strokeWidth="1.5" />
        <path d="M3 6L18 3V30L3 27Z" fill="#1e7145" />
        <text x="10.5" y="22" textAnchor="middle" fontSize="15" fontWeight="700" fill="#fff">X</text>
      </>
    ),
  },
  {
    name: "Power BI",
    state: "active",
    icon: (
      <>
        <rect x="16" y="2" width="11" height="29" rx="1" fill="#d89b0c" />
        <rect x="10" y="9" width="11" height="22" rx="1" fill="#edc02f" />
        <rect x="5" y="17" width="10" height="14" rx="1" fill="#f9de62" />
      </>
    ),
  },
  {
    name: "SQL Server tools",
    icon: (
      <>
        <path d="M5 5H20V20H5Z" fill="#f2c52d" />
        <ellipse cx="12.5" cy="5" rx="7.5" ry="3" fill="#f4a55a" />
        <ellipse cx="12.5" cy="20" rx="7.5" ry="2.5" fill="#f2c52d" />
        <path d="M23 4H30V11M3 22V29H10" stroke="#4ca64c" strokeWidth="2.5" />
        <path d="M15 28L27 17M17 17L29 28" stroke="#9b59c6" strokeWidth="2.5" />
      </>
    ),
  },
  {
    name: "Edge",
    icon: (
      <>
        <circle cx="16" cy="16" r="14" fill="#1878c8" />
        <path d="M4 10C10 -1 30 0 30 15C29 21 21 22 19 18C20 12 13 7 4 10Z" fill="#38c8a8" />
        <path d="M3 13C10 8 17 11 17 15C12 16 13 24 24 27C14 33 2 26 3 13Z" fill="#1469b8" />
        <path d="M2 23H16V30H2Z" fill="#d98b1e" />
      </>
    ),
  },
  {
    name: "Brave",
    state: "open",
    icon: (
      <>
        <path d="M9 2H23L29 8L26 23L16 32L6 23L3 8Z" fill="#f23f1c" />
        <path d="M9 8L16 7L23 8L25 13L22 19L16 26L10 19L7 13Z" fill="#fff" />
        <path d="M10 13L14 14L13 16ZM22 13L18 14L19 16ZM16 17L19 21H13Z" fill="#f23f1c" />
      </>
    ),
  },
];

const tray: React.ReactNode[] = [
  <><rect width="20" height="20" rx="4" fill="#fff" /><path d="M5 15L8 5L12 15L15 5" stroke="#d6408c" strokeWidth="2.5" /><path d="M4 15L7 6M13 14L16 5" stroke="#3f6be8" strokeWidth="2.5" /></>,
  <><circle cx="8" cy="3" r="3" fill="#7b83eb" /><circle cx="16" cy="4" r="2.5" fill="#5059c9" /><path d="M4 8H19V16H4Z" fill="#5059c9" /><rect y="8" width="10" height="10" fill="#4047b0" /><text x="5" y="16" textAnchor="middle" fontSize="8" fill="#fff">T</text><circle cx="15" cy="15" r="6" fill="#13a10e" /><path d="M12 15L14 17L18 13" stroke="#fff" strokeWidth="1.5" /></>,
  <><path d="M1 2H19V16H1Z" fill="#1370b8" /><path d="M5 2H15V18L12 19L5 16Z" fill="#28a8e0" /></>,
  <><path d="M4 15C-2 13 1 7 5 7C7 0 16 2 17 8C21 9 20 15 16 15Z" fill="#1a82dc" /><circle cx="15" cy="14" r="6" fill="#0f6cbd" /><path d="M12 13C13 10 17 10 18 13M18 15C17 18 13 18 12 15" stroke="#fff" strokeWidth="1.5" /></>,
  <><circle cx="10" cy="10" r="8.5" stroke="#fff" strokeWidth="1.5" /><circle cx="10" cy="10" r="4.5" fill="#fff" /></>,
  <><path d="M10 0L18 3V9Q18 16 10 20Q2 16 2 9V3Z" fill="#fff" /><path d="M10 1V19M2 9H18" stroke="#1c1c1c" /><path d="M14 10L20 20H9Z" fill="#f7c62f" /><path d="M14.5 13V17M14.5 18V19" stroke="#1c1c1c" strokeWidth="1.3" /></>,
  <path d="M2 18C3 10 10 3 17 2M6 18C7 12 11 7 17 6M10 18C11 14 13 11 17 10M14 18C14 16 15 15 17 14" stroke="#c8c6c4" strokeWidth="1.3" />,
  <path d="M1 7H4L9 2V18L4 13H1ZM12 7Q14 10 12 13M14 5Q18 10 14 15M17 3Q22 10 17 17" stroke="#fff" strokeWidth="1.2" />,
  <path d="M5 5H14V15H5ZM14 9L17 7V13L14 11M6 2Q10 0 14 2M6 18Q10 20 14 18" stroke="#fff" strokeWidth="1.3" />,
];

const Taskbar = () => (
  <div className="flex h-[51px] items-stretch bg-[#1c1c1c] text-white">
    <button aria-label="Start" className="flex w-[60px] items-center justify-center">
      <Svg size={20}>
        <path d="M0 3L9 2V9.5H0ZM10 2L20 0V9.5H10ZM0 10.5H9V18L0 17ZM10 10.5H20V20L10 18Z" fill="#fff" />
      </Svg>
    </button>
    <label className="flex w-[360px] items-center border border-[#4a4a4a] bg-[#323232] pl-[14px] pr-3">
      <Svg size={20}>
        <circle cx="13" cy="7" r="6" stroke="#fff" strokeWidth="1.5" />
        <path d="M9 11L1 19" stroke="#fff" strokeWidth="1.5" />
      </Svg>
      <input
        aria-label="Type here to search"
        placeholder="Type here to search"
        className="ml-[15px] w-[200px] bg-transparent text-[18px] outline-none placeholder:text-[#d8d8d8]"
      />
      <svg width="80" height="34" viewBox="0 0 80 34" className="ml-auto" aria-hidden="true">
        <path d="M33 1Q36 14 47 16Q36 19 33 31Q30 19 19 16Q30 14 33 1Z" fill="#fbc81c" stroke="#fbc81c" strokeWidth="3" strokeLinejoin="round" />
        <path d="M61 14Q62 20 68 21Q62 23 61 29Q60 23 54 21Q60 20 61 14Z" fill="#fbd84a" />
        <path d="M9 22Q10 27 14 28Q10 29 9 33Q7 30 3 29Q7 26 9 22Z" fill="#1fb0e6" stroke="#1fb0e6" />
        <circle cx="54" cy="4" r="2.5" fill="#e8642c" />
        <circle cx="76" cy="30" r="2.5" fill="#8cc640" />
      </svg>
    </label>
    {apps.map((a) => (
      <button
        key={a.name}
        aria-label={a.name}
        className={`flex w-[62px] items-center justify-center ${
          a.state === "active" ? "bg-[#474747]" : "px-[5px]"
        }`}
      >
        <span
          className={`flex h-full w-full items-center justify-center pt-[3px] ${
            a.state ? "border-b-[3px] border-[#76b9ed]" : "pb-[3px]"
          }`}
        >
          <Svg size={30} box="0 0 32 32">{a.icon}</Svg>
        </span>
      </button>
    ))}
    <div className="ml-auto flex items-center pr-[5px] text-[15px]">
      <button className="flex items-center">
        <Svg size={36} className="mt-[-3px]">
          <path d="M10 33C1 33 1 23 9 23C11 14 22 13 24 22C33 21 34 33 26 33Z" fill="#a9cbf6" />
          <circle cx="25" cy="10" r="8" fill="#c42b1c" />
          <text x="25" y="14" textAnchor="middle" fontSize="11" fill="#fff">1</text>
        </Svg>
        <span className="ml-[6px] text-[17px]">26°C</span>
        <span dir="rtl" className="ml-3 text-[17px] font-['DejaVu_Sans',sans-serif]">غائم غالبًا</span>
      </button>
      <div className="ml-[29px] flex items-center gap-[10px]">
        {tray.map((t, i) => (
          <Svg key={i} size={20} className="overflow-visible">{t}</Svg>
        ))}
        <svg width="30" height="20" viewBox="0 -1 30 20" fill="none" className="ml-[2px]" aria-hidden="true">
          <rect x="1" y="0" width="28" height="18" stroke="#fff" strokeWidth="1.3" />
          <path d="M4 5H26M4 9H26" stroke="#fff" strokeWidth="1.5" strokeDasharray="2 2" />
          <path d="M4 13H7M9 13H21M23 13H26" stroke="#fff" strokeWidth="1.5" />
        </svg>
      </div>
      <span className="ml-[13px] text-[14px]">ENG</span>
      <div className="ml-[15px] flex flex-col items-center text-[14px] leading-[23px]">
        <span>2:39 PM</span>
        <span>3/31/2026</span>
      </div>
      <button aria-label="Notifications" className="ml-[22px] mr-[14px]">
        <Svg size={32}>
          <path d="M1 4H21V20H12L7 24V20H1Z" fill="#fff" />
          <path d="M4 8H18M4 12H18M4 16H14" stroke="#1c1c1c" strokeWidth="1.3" />
          <circle cx="21" cy="22" r="9.5" fill="#2b2b2b" stroke="#8a8886" />
          <text x="21" y="27" textAnchor="middle" fontSize="13" fill="#fff">1</text>
        </Svg>
      </button>
      <span className="h-full border-l border-[#605e5c]" />
    </div>
  </div>
);

const App = () => {
  return (
    <div className="relative flex min-h-screen flex-col overflow-hidden bg-white font-['Open_Sans','Noto_Sans',sans-serif]">
      <TitleBar />
      <Ribbon />
      <main className="flex flex-1 items-stretch">
        <Rail />
        <div className="flex flex-1 flex-col">
          <div className="flex flex-1">
            <div className="flex flex-1 items-start justify-center">
              <Chart />
            </div>
            <aside className="flex w-[41px] flex-col items-center border-l border-[#a19f9d] bg-white pt-4">
              <button aria-label="Expand filters"><DoubleChevron left /></button>
              <Svg size={16} className="ml-2 mt-[18px]">
                <path d="M14 1V15L8 10H2V6H8Z" stroke="#252423" strokeWidth="1.4" />
              </Svg>
              <h2 className="ml-1 mt-2 text-[18px] font-semibold [writing-mode:vertical-rl]">Filters</h2>
            </aside>
          </div>
          <PageTabs />
        </div>
        <Visualizations />
        <DataPane />
      </main>
      <StatusBar />
      <Taskbar />

      <div className="pointer-events-none absolute right-[76px] bottom-[96px] w-[290px] text-[#a8a6a4]">
        <p className="text-[24px] leading-8">Activate Windows</p>
        <p className="text-[17px] leading-7">Go to Settings to activate Windows.</p>
      </div>
      <div className="pointer-events-none absolute bottom-0 left-1/2 flex -translate-x-1/2 flex-col items-center font-bold">
        <p dir="rtl" className="text-[66px] leading-[74px] text-[#d4d4d4]/80 font-['DejaVu_Sans',sans-serif]">نفـذلي</p>
        <p className="text-[37px] leading-[44px] text-[#d0d0d0]/85 font-['Roboto',sans-serif]">nafezly.com</p>
      </div>
    </div>
  );
};

export default App;
